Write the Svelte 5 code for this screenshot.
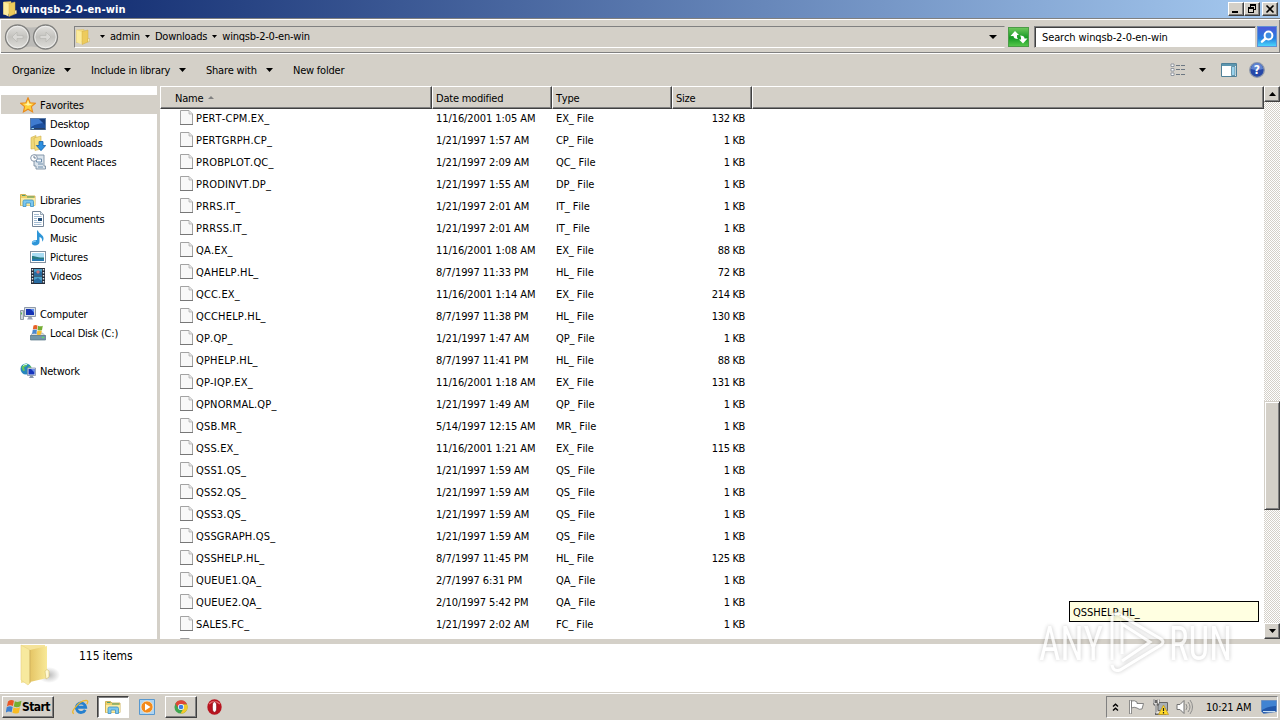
<script lang="ts">
	type FileRow = { name: string; modified: string; size: string };
	type Place = { label: string; icon: string; root?: boolean; active?: boolean };

	const files: FileRow[] = [
		{ name: 'PERT-CPM.EX_', modified: '11/16/2001 1:05 AM', size: '132 KB' },
		{ name: 'PERTGRPH.CP_', modified: '1/21/1997 1:57 AM', size: '1 KB' },
		{ name: 'PROBPLOT.QC_', modified: '1/21/1997 2:09 AM', size: '1 KB' },
		{ name: 'PRODINVT.DP_', modified: '1/21/1997 1:55 AM', size: '1 KB' },
		{ name: 'PRRS.IT_', modified: '1/21/1997 2:01 AM', size: '1 KB' },
		{ name: 'PRRSS.IT_', modified: '1/21/1997 2:01 AM', size: '1 KB' },
		{ name: 'QA.EX_', modified: '11/16/2001 1:08 AM', size: '88 KB' },
		{ name: 'QAHELP.HL_', modified: '8/7/1997 11:33 PM', size: '72 KB' },
		{ name: 'QCC.EX_', modified: '11/16/2001 1:14 AM', size: '214 KB' },
		{ name: 'QCCHELP.HL_', modified: '8/7/1997 11:38 PM', size: '130 KB' },
		{ name: 'QP.QP_', modified: '1/21/1997 1:47 AM', size: '1 KB' },
		{ name: 'QPHELP.HL_', modified: '8/7/1997 11:41 PM', size: '88 KB' },
		{ name: 'QP-IQP.EX_', modified: '11/16/2001 1:18 AM', size: '131 KB' },
		{ name: 'QPNORMAL.QP_', modified: '1/21/1997 1:49 AM', size: '1 KB' },
		{ name: 'QSB.MR_', modified: '5/14/1997 12:15 AM', size: '1 KB' },
		{ name: 'QSS.EX_', modified: '11/16/2001 1:21 AM', size: '115 KB' },
		{ name: 'QSS1.QS_', modified: '1/21/1997 1:59 AM', size: '1 KB' },
		{ name: 'QSS2.QS_', modified: '1/21/1997 1:59 AM', size: '1 KB' },
		{ name: 'QSS3.QS_', modified: '1/21/1997 1:59 AM', size: '1 KB' },
		{ name: 'QSSGRAPH.QS_', modified: '1/21/1997 1:59 AM', size: '1 KB' },
		{ name: 'QSSHELP.HL_', modified: '8/7/1997 11:45 PM', size: '125 KB' },
		{ name: 'QUEUE1.QA_', modified: '2/7/1997 6:31 PM', size: '1 KB' },
		{ name: 'QUEUE2.QA_', modified: '2/10/1997 5:42 PM', size: '1 KB' },
		{ name: 'SALES.FC_', modified: '1/21/1997 2:02 AM', size: '1 KB' },
	];

	const groups: Place[][] = [
		[
			{ label: 'Favorites', icon: 'star', root: true, active: true },
			{ label: 'Desktop', icon: 'desktop' },
			{ label: 'Downloads', icon: 'downloads' },
			{ label: 'Recent Places', icon: 'recent' },
		],
		[
			{ label: 'Libraries', icon: 'libraries', root: true },
			{ label: 'Documents', icon: 'document' },
			{ label: 'Music', icon: 'music' },
			{ label: 'Pictures', icon: 'pictures' },
			{ label: 'Videos', icon: 'videos' },
		],
		[
			{ label: 'Computer', icon: 'computer', root: true },
			{ label: 'Local Disk (C:)', icon: 'disk' },
		],
		[{ label: 'Network', icon: 'network', root: true }],
	];

	const path = ['admin', 'Downloads', 'winqsb-2-0-en-win'];

	const fileType = (name: string) => `${name.split('.').pop()} File`;
</script>

{#snippet caret()}
	<svg class="caret" width="7" height="4" viewBox="0 0 7 4"><path d="M0 0h7L3.5 4z" /></svg>
{/snippet}

{#snippet page()}
	<svg width="13" height="15" viewBox="0 0 13 15">
		<path d="M.5.5h8.500l3.500 3.500v10.500H.5z" fill="#f8f8f8" stroke="#a3a3a3" />
		<path d="M9 .5v3.500h3.500" fill="#e4e4e4" stroke="#aaa" stroke-width=".7" />
		<path d="M0 14.500h13" stroke="#777" />
	</svg>
{/snippet}

{#snippet icon(name: string)}
	<svg class="icon" width="16" height="16" viewBox="0 0 16 16">
		{#if name === 'folder'}
			<path d="M1.500 1 9 .5v12l-7.500 1z" fill="#f5dc7c" stroke="#dcbd5c" stroke-width=".5" />
			<path d="M7 2.500 13 1v12l-6 2.500z" fill="#edcb5c" stroke="#d0ad47" stroke-width=".5" />
			<path d="m1.500 1 5 2v12.500L1.500 13z" fill="#fbeb9c" />
			<path d="M13 9.500h1.500v3L13 13z" fill="#fff8cf" stroke="#c5a23e" stroke-width=".4" />
		{:else if name === 'star'}
			<path
				d="M8 .8 10.100 5.700l5.300.5-4 3.500 1.200 5.200L8 12.200l-4.600 2.700 1.200-5.200-4-3.500 5.300-.5z"
				fill="#ffd23c"
				stroke="#e88a1c"
				stroke-width="1.100"
			/>
			<path d="M8 3.200 9.200 6.800l3 .4-4.200 1.600-3.800-1.700 2.700-.3z" fill="#fff4a8" />
		{:else if name === 'desktop'}
			<rect x=".5" y="2.500" width="15" height="11" fill="#1c4f9e" stroke="#5c7da8" />
			<path d="M1 3h14v4c-5 0-9 1-14 4z" fill="#3f7bd0" />
			<path d="M9 3h6v6z" fill="#163d7d" />
			<path d="M1 12h14v1.500H1z" fill="#274166" />
			<path d="M1.500 12h2.500v1H1.500z" fill="#8fd0f5" />
		{:else if name === 'downloads'}
			<path d="M1 2.500 6 .5v13l-5 .5z" fill="#f0d878" stroke="#cfae4c" stroke-width=".6" />
			<path d="M4 3 11 1v13l-6 1.500z" fill="#f7df80" stroke="#cfae4c" stroke-width=".6" />
			<path d="M9 6.500h4v4h2.700L11 15.700 6.300 10.500H9z" fill="#2d8fe0" stroke="#1560a8" stroke-width=".8" />
		{:else if name === 'recent'}
			<path d="M4 1h10v11h1.500v3H6v-3H4z" fill="#dbe4ec" stroke="#7b8fa3" stroke-width=".9" />
			<path d="M6.500 5h5v3h-5zM8 10h5M8 13h5" fill="#f7fbff" stroke="#6f8fae" />
			<circle cx="4" cy="4" r="3.300" fill="#fff" stroke="#8797aa" />
			<path d="M4 2v2h2" fill="none" stroke="#48617b" stroke-width=".8" />
		{:else if name === 'libraries'}
			<path d="M.5 13.500v-11h5l1.500 1.500h8v9.500z" fill="#eed069" stroke="#c7a53f" stroke-width=".8" />
			<path d="M2 3.500h3.500M7 5h7" stroke="#4f9f72" />
			<path d="M1 6h14v7.500H1z" fill="#fbeba2" />
			<path
				d="M3 14.500V9.500q0-1.500 1.500-1.500h7.500q1.500 0 1.500 1.500v5h-3v-3.500H6v3.500z"
				fill="#7cc7ee"
				stroke="#3b90c4"
				stroke-width=".8"
			/>
		{:else if name === 'document'}
			<path d="M2.500.5h8l3 3v12h-11z" fill="#fff" stroke="#738497" />
			<path d="M10.500.5v3h3" fill="#dce7f0" stroke="#738497" stroke-width=".7" />
			<path d="M4 3.500h5M4 5.500h7.500M4 7.500h3M4 9.500h3M4 11.500h7.500M4 13.500h7.500" stroke="#8ba9c6" stroke-width=".8" />
			<path d="M8 7h4v3H8z" fill="#234e79" />
		{:else if name === 'music'}
			<path
				d="M8 .5c.5 3 5 4 5.500 7.500.2 1.500-.5 3-1.300 3.800.3-3.300-1.200-4.300-2.700-4.800V12c0 2.300-2 3.500-4.500 3.500-2 0-3.200-1-3.200-2.500 0-1.900 2.500-3.300 5.200-2.900V.5z"
				fill="#2e96d8"
			/>
			<path d="M2.800 12.600c.4-1.200 2-1.700 3.200-1.500" stroke="#a2ddff" fill="none" />
		{:else if name === 'pictures'}
			<rect x=".5" y="2.500" width="15" height="11" fill="#fff" stroke="#8391a0" />
			<path d="M2 4h12v8H2z" fill="#a9dcf3" />
			<path d="M2 7c4 0 5 2 12 1.500V12H2z" fill="#277c83" />
			<path d="M2 10h12v2H2z" fill="#2678b0" />
		{:else if name === 'videos'}
			<path d="M1 0h14v16H1z" fill="#252d3a" />
			<path d="M4 1h8v6.500H4zM4 8.500h8V15H4z" fill="#4c9fc8" />
			<path d="M4 4c3 0 4-2 8 0v3.500H4zM4 12l4-2 4 3v2H4z" fill="#286ba1" />
			<path d="m8 2 2 2-2 2-2-2z" fill="#c9747b" />
			<path d="M2.500 1v14M13.500 1v14" stroke="#e5eaee" stroke-width="1.400" stroke-dasharray="1.500 1.500" />
		{:else if name === 'computer'}
			<path d="M.5 4.500h3v9h-3z" fill="#ced6da" stroke="#7a8790" stroke-width=".8" />
			<path d="M1.500 6.500v2" stroke="#55bb51" />
			<path d="M4.500 1.500h11v9h-11z" fill="#d9e0e6" stroke="#8e99a9" />
			<path d="M6 3h8v6H6z" fill="#1532b4" />
			<path d="M10 3h4v4c-1-2-2-3-4-4z" fill="#5c8bee" />
			<path d="M8.500 11h3l1.500 2.500H7z" fill="#98a1b5" />
		{:else if name === 'disk'}
			<path d="M2.500 8h10l3 3H.5z" fill="#d8dce0" stroke="#8b969f" stroke-width=".6" />
			<path d="M.5 10.500h15v4.500H.5z" fill="#7296a8" stroke="#547384" stroke-width=".7" />
			<path d="M12 12.500h2" stroke="#56e65a" stroke-width="1.200" />
			<path d="M3.500.6q2-1 4 0L7 4.500q-2-1-4.200 0z" fill="#e86127" />
			<path d="M8 .8q2 1 4.800 0L12 5q-2 1-4.500 0z" fill="#75ad33" />
			<path d="M2.700 5q2-1 4.200 0l-.6 4q-2-1-4.200 0z" fill="#4988cf" />
			<path d="M7.400 5.500q2 1 4.500 0L11 9.400q-2 1-4.200 0z" fill="#f6bd2f" />
		{:else if name === 'network'}
			<circle cx="6" cy="6" r="5.500" fill="#2786bd" />
			<path d="M1.500 4Q4 0 8 1L6.500 3 4 4.500l1 3L3 8zM8 4l3-1 .5 3-2 2z" fill="#67c65c" />
			<path d="M3 2.500Q5 1 7 1.500" stroke="#c9f4f5" fill="none" />
			<path d="M7.500 5h8v7.500h-8z" fill="#dfe7f3" stroke="#8190aa" stroke-width=".8" />
			<path d="M8.500 6h6v5.500h-6z" fill="#1735bd" />
			<path d="M11 6h3.500v3.500z" fill="#6a91e9" />
			<path d="M10.500 12.500h2l1.500 2.500h-5z" fill="#8794a9" />
		{/if}
	</svg>
{/snippet}

<div class="screen">
	<header class="title-bar">
		{@render icon('folder')}
		<h1>winqsb-2-0-en-win</h1>
		<div class="window-buttons">
			<button aria-label="Minimize">
				<svg width="12" height="10" viewBox="0 0 12 10"><path d="M2 7h6v2H2z" /></svg>
			</button>
			<button aria-label="Restore">
				<svg width="12" height="10" viewBox="0 0 12 10">
					<path d="M4 0h6v6H8V5h1V2H5v1H4zM2 3h6v6H2zm1 2v3h4V5z" fill-rule="evenodd" />
				</svg>
			</button>
			<button class="close" aria-label="Close">
				<svg width="12" height="10" viewBox="0 0 12 10">
					<path d="m2.500 1.500 7 7m0-7-7 7" stroke="#000" stroke-width="1.600" />
				</svg>
			</button>
		</div>
	</header>

	<nav class="address-row">
		<svg class="travel" width="56" height="28" viewBox="0 0 56 28">
			<defs>
				<linearGradient id="travel-fill" x2="0" y2="1">
					<stop offset="0" stop-color="#e4e3e0" />
					<stop offset=".5" stop-color="#c3c2be" />
					<stop offset="1" stop-color="#e0dfdb" />
				</linearGradient>
			</defs>
			<path d="M12 2q16 5 32 0v24q-16-5-32 0z" fill="#bcbbb8" />
			{#each [14.5, 42.5] as cx}
				<circle {cx} cy="14" r="12" fill="url(#travel-fill)" stroke="#81817f" stroke-width="1.300" />
				<circle {cx} cy="14" r="10.700" fill="none" stroke="#f4f4f2" stroke-width=".8" />
			{/each}
			<path
				d="m14 9-5 5 5 5v-3.500h6v-3h-6zM43 9l5 5-5 5v-3.500h-6v-3h6z"
				fill="#d9d8d5"
				stroke="#b8b7b3"
				stroke-width=".7"
			/>
		</svg>
		<div class="address">
			{@render icon('folder')}
			{#each path as part}
				<span class="crumb">{@render caret()}{part}</span>
			{/each}
			<span class="history">
				<svg width="8" height="4" viewBox="0 0 8 4"><path d="M0 0h8L4 4z" /></svg>
			</span>
		</div>
		<button class="refresh" aria-label="Refresh">
			<svg width="20" height="18" viewBox="0 0 20 18">
				<path
					d="M1.500 8 6 3l4 4H8v1.500Q8 10 9 11 4.500 11 4.500 8zM18.500 10.500 14 15.500l-4-4h2V10q0-1.500-1-2.500 4.500 0 4.500 3z"
					fill="#fff"
				/>
			</svg>
		</button>
		<div class="search">Search winqsb-2-0-en-win</div>
		<button class="search-button" aria-label="Search">
			<svg width="18" height="18" viewBox="0 0 18 18">
				<circle cx="10.500" cy="7.500" r="3.900" fill="#3e8de0" stroke="#fff" stroke-width="2" />
				<path d="m7.500 10.500-3.500 3.200" stroke="#fff" stroke-width="2.500" stroke-linecap="round" />
			</svg>
		</button>
	</nav>

	<div class="toolbar">
		<span class="command organize">Organize {@render caret()}</span>
		<span class="command include">Include in library {@render caret()}</span>
		<span class="command share">Share with {@render caret()}</span>
		<span class="command">New folder</span>
		<div class="views">
			<svg width="16" height="14" viewBox="0 0 16 14">
				<path d="M1 1h3v2.500H1zM1 5.500h3V8H1zM1 10h3v2.500H1z" fill="#fff" stroke="#7e8793" stroke-width=".8" />
				<path d="M6 2.500h4m1 0h4M6 6.500h4m1 0h4M6 11.500h4m1 0h4" stroke="#6c7782" />
			</svg>
			{@render caret()}
			<svg class="preview" width="16" height="14" viewBox="0 0 16 14">
				<path d="M.5.5h15v13H.5z" fill="#fff" stroke="#4e8098" />
				<path d="M1 1h14v2H1z" fill="#5c96af" />
				<path d="M10.500 3.500H14v9h-3.500z" fill="#9bd3ed" stroke="#4e8098" stroke-width=".8" />
			</svg>
			<svg width="16" height="16" viewBox="0 0 16 16">
				<circle cx="8" cy="8" r="7.300" fill="#2547a8" stroke="#8f99ab" stroke-width="1.300" />
				<path d="M2 7a6 6 0 0 1 12 0Q8 9 2 7z" fill="#5f83d0" />
				<text x="8" y="12.300" class="help" text-anchor="middle">?</text>
			</svg>
		</div>
	</div>

	<main>
		<aside>
			{#each groups as group}
				<ul>
					{#each group as place}
						<li class:root={place.root} class:active={place.active}>
							{@render icon(place.icon)}
							<span>{place.label}</span>
						</li>
					{/each}
				</ul>
			{/each}
		</aside>

		<section class="files">
			<div class="columns heading">
				<div>
					Name <svg class="sort" width="6" height="3" viewBox="0 0 6 3"><path d="M0 3h6L3 0z" /></svg>
				</div>
				<div>Date modified</div>
				<div>Type</div>
				<div>Size</div>
				<div></div>
			</div>
			<div class="list">
				{#each files as { name, modified, size } (name)}
					<div class="columns row">
						<div class="name">{@render page()}<span>{name}</span></div>
						<div>{modified}</div>
						<div>{fileType(name)}</div>
						<div class="size">{size}</div>
					</div>
				{/each}
				<div class="columns row"><div class="name">{@render page()}</div></div>
			</div>
		</section>

		<div class="scrollbar">
			<button aria-label="Scroll up">
				<svg width="7" height="4" viewBox="0 0 7 4"><path d="M0 4h7L3.500 0z" /></svg>
			</button>
			<div class="thumb"></div>
			<button aria-label="Scroll down">{@render caret()}</button>
		</div>
	</main>

	<footer class="details">
		<svg width="42" height="46" viewBox="0 0 42 46">
			<defs>
				<linearGradient id="folder-front">
					<stop offset="0" stop-color="#e5c565" />
					<stop offset="1" stop-color="#f8e998" />
				</linearGradient>
				<radialGradient id="folder-shadow">
					<stop offset="0" stop-color="#777" stop-opacity=".5" />
					<stop offset="1" stop-color="#777" stop-opacity="0" />
				</radialGradient>
			</defs>
			<ellipse cx="30" cy="31" rx="11" ry="8" fill="url(#folder-shadow)" />
			<path d="M2 1h24v30L12 37 2 39z" fill="#f5e39a" />
			<path d="M11 6 28 2v32l-17 4z" fill="url(#folder-front)" />
			<path d="M2 1 11 6v33l-2 2-7-5z" fill="#f7e99e" stroke="#e7d282" stroke-width=".6" />
			<path d="M11 6v33" stroke="#c4a34d" stroke-width=".7" />
			<path d="M26 27q2-3 4 0v6l-3 2z" fill="#fff9d6" stroke="#d4bd6c" stroke-width=".6" />
		</svg>
		<span>115 items</span>
	</footer>

	<div class="taskbar">
		<button class="start">
			<svg width="16" height="16" viewBox="0 0 16 16">
				<path d="M2 2.500Q5 .1 8 1.800L6.900 7Q3.900 5.500.9 7.500z" fill="#e95624" />
				<path d="M8.800 2.300q3 1.500 6.700-.5l-1.200 5.500q-3.300 1.700-6.500.2z" fill="#74ae31" />
				<path d="M.7 8.300q3-1.800 6-.4l-1.100 5.300q-3-1.500-5.800.3z" fill="#3e80d0" />
				<path d="M7.500 8.500q3 1.500 6.500-.2l-1.200 5.400q-3.200 1.700-6.400.1z" fill="#f8bb22" />
			</svg>
			<b>Start</b>
		</button>
		<svg class="ie" width="17" height="16" viewBox="0 0 18 16">
			<path d="M14 11A5 5 0 1 1 14.500 8.300H5.500" fill="none" stroke="#2580cf" stroke-width="3" />
			<path d="M2 15q-3-1 1-6Q9 1 15 1q3 .3.7 4" fill="none" stroke="#edb72c" stroke-width="1.300" />
		</svg>
		<div class="task pressed">{@render icon('libraries')}</div>
		<svg class="player" width="16" height="16" viewBox="0 0 16 16">
			<path d="M.5.5h15v15H.5z" fill="#aed4f1" stroke="#5898cf" />
			<circle cx="8" cy="8" r="6" fill="#f38a1b" stroke="#fff0d5" stroke-width=".7" />
			<path d="m6 4.500 5.500 3.500L6 11.500z" fill="#fff" />
		</svg>
		<div class="task">
			<svg width="14" height="14" viewBox="0 0 16 16">
				<circle cx="8" cy="8" r="7.500" fill="#3fa650" />
				<path d="M1.500 4.200A7.500 7.500 0 0 1 15 5H8L5 9z" fill="#df4638" />
				<path d="M15 5a7.500 7.500 0 0 1-7.500 10.500L11 9.500 8 5z" fill="#f5c929" />
				<circle cx="8" cy="8" r="3.500" fill="#fff" />
				<circle cx="8" cy="8" r="2.700" fill="#3e7de2" />
			</svg>
		</div>
		<svg class="opera" width="15" height="16" viewBox="0 0 15 16">
			<ellipse cx="7.500" cy="8" rx="7.200" ry="7.800" fill="#b8141f" />
			<path d="M2 5Q7 0 13 5" stroke="#e5696c" stroke-width="1.500" fill="none" />
			<ellipse cx="7.500" cy="8" rx="2.200" ry="5.300" fill="#fff" stroke="#850d16" stroke-width=".7" />
		</svg>
		<div class="tray">
			<svg class="expand" width="7" height="9" viewBox="0 0 7 9">
				<path d="m1 3.500 2.500-2.300L6 3.500m-5 4 2.500-2.300L6 7.500" fill="none" stroke="#000" stroke-width="1.400" />
			</svg>
			<svg width="17" height="16" viewBox="0 0 17 16">
				<path d="M2.500 1v14" stroke="#777" stroke-width="2.500" />
				<path d="M2.500 1.500v13" stroke="#fff" />
				<path
					d="M3.500 2q3-1 5.500 1v1.500h6.500L14 10q-3 1-5-1-3-1.500-5.500 0z"
					fill="#fff"
					stroke="#777"
					stroke-width=".9"
				/>
			</svg>
			<svg class="net" width="17" height="16" viewBox="0 0 17 16">
				<path d="M6 3.500h9.500v8H6z" fill="#a9b0b5" stroke="#666" />
				<path d="M2 .5V4q0 2 2 2v9h10M4 1v3M6.500.5v4Q6.500 6 4 6" fill="none" stroke="#666" stroke-width="2" />
				<path d="M2 .5V4q0 1 2 1v9h8M6.500.5v4" fill="none" stroke="#fff" stroke-width=".9" />
				<path d="m11.500 6 5 9.500h-10z" fill="#ffda27" stroke="#bc921b" stroke-width=".7" />
				<path d="M11.500 9v3m0 1v1.500" stroke="#222" stroke-width="1.200" />
			</svg>
			<svg class="sound" width="17" height="16" viewBox="0 0 17 16">
				<path d="M1 5.500h3L8 1.500v13l-4-4H1z" fill="#fff" stroke="#737373" />
				<path d="M10 5q2 3 0 6m2-8q4 5 0 10m2-12q5 7 0 14" fill="none" stroke="#858585" stroke-width=".9" />
			</svg>
			<time>10:21 AM</time>
			<svg class="show" width="16" height="14" viewBox="0 0 16 14">
				<path d="M.5.5h15v11l-13 2-2-2z" fill="#2257aa" stroke="#6d90c0" />
				<path d="M1 1h14v5q-7 0-14 4z" fill="#4183d2" />
				<path d="M2 11.500h12" stroke="#c7e0f4" />
			</svg>
		</div>
	</div>

	<div class="tooltip">QSSHELP.HL_</div>
	<svg class="watermark" width="210" height="66" viewBox="0 0 210 66">
		<text x="4" y="50" textLength="64" lengthAdjust="spacingAndGlyphs">ANY</text>
		<text x="134" y="50" textLength="63" lengthAdjust="spacingAndGlyphs">RUN</text>
		<path d="M77 6v44M87 44V14l28 18-28 19M77 6q3-5 10 0l39 23q4 3 0 6L85 60q-7 2-8-5" />
	</svg>
</div>

<style>
	:global(body) {
		overflow: hidden;
	}

	.screen {
		position: relative;
		display: flex;
		flex-direction: column;
		width: 1280px;
		height: 720px;
		overflow: hidden;
		background: #d4d0c8;
		color: #000;
		font-family: 'DejaVu Sans Condensed', 'DejaVu Sans', sans-serif;
		font-size: 11px;
		font-stretch: condensed;
		font-kerning: none;
		letter-spacing: -0.22px;
		line-height: 14px;
		white-space: nowrap;
	}

	svg {
		display: block;
		flex: none;
	}

	button {
		display: flex;
		align-items: center;
		justify-content: center;
		box-sizing: border-box;
		padding: 0;
		background: #d4d0c8;
		border: 1px solid;
		border-color: #fff #404040 #404040 #fff;
		box-shadow: inset -1px -1px #808080;
		color: inherit;
		font: inherit;
		letter-spacing: inherit;
	}

	ul {
		margin: 0;
		padding: 0;
		list-style: none;
	}

	.title-bar {
		display: flex;
		align-items: center;
		height: 18px;
		padding: 0 2px;
		background: linear-gradient(90deg, #0a246a, #a6caf0);
		color: #fff;
	}

	h1 {
		margin: 0 0 0 2px;
		padding-top: 1px;
		font-size: 11px;
		font-weight: bold;
		letter-spacing: 0.15px;
	}

	.window-buttons {
		display: flex;
		margin-left: auto;
	}

	.window-buttons button {
		width: 16px;
		height: 14px;
	}

	.window-buttons .close {
		margin-left: 2px;
	}

	.address-row {
		display: flex;
		align-items: center;
		box-sizing: border-box;
		height: 36px;
		padding: 1px 1px 0 3px;
		border-top: 1px solid #808080;
		border-bottom: 1px solid #fff;
		box-shadow:
			inset 1px 1px #fff,
			inset -1px -1px #808080;
	}

	.address {
		display: flex;
		align-items: center;
		box-sizing: border-box;
		width: 931px;
		height: 22px;
		margin-left: 15px;
		border: 1px solid;
		border-color: #808080 #d4d0c8 #fff #808080;
	}

	.crumb {
		display: flex;
		align-items: center;
	}

	.crumb .caret {
		width: 5px;
		height: 3px;
		margin: 0 5px 1px;
	}

	.crumb:nth-child(2) {
		margin-left: 4px;
	}

	.history {
		margin: 0 7px 0 auto;
	}

	.refresh {
		width: 21px;
		height: 20px;
		margin-left: 3px;
		background: linear-gradient(#6cc65b, #159923 55%, #53c749);
		border-color: #4b9b47;
		box-shadow: none;
	}

	.search {
		box-sizing: border-box;
		width: 222px;
		height: 22px;
		margin-left: 5px;
		padding: 4px 7px;
		background: #fff;
		border: 1px solid;
		border-color: #808080 #d4d0c8 #d4d0c8 #808080;
		box-shadow: inset 1px 1px #404040;
		letter-spacing: -0.12px;
	}

	.search-button {
		width: 20px;
		height: 21px;
		margin-left: 1px;
		background: linear-gradient(#4b59d9, #257fdf 60%, #4bd5fc);
		border-color: #6290d3;
		box-shadow: none;
	}

	.toolbar {
		display: flex;
		align-items: center;
		height: 31px;
		padding: 0 15px 0 12px;
	}

	.command {
		display: flex;
		align-items: center;
		justify-content: space-between;
		margin-right: 20px;
		padding-top: 2px;
	}

	.command .caret {
		margin-bottom: 2px;
	}

	.organize {
		width: 59px;
	}

	.include {
		width: 95px;
	}

	.share {
		width: 67px;
	}

	.views {
		display: flex;
		align-items: center;
		margin-left: auto;
	}

	.views .caret {
		margin: 0 15px 0 13px;
	}

	.preview {
		margin-right: 12px;
	}

	.help {
		fill: #fff;
		font-size: 12px;
		font-weight: bold;
		letter-spacing: 0;
	}

	main {
		display: flex;
		box-sizing: border-box;
		height: 554px;
		padding-top: 1px;
	}

	aside {
		box-sizing: border-box;
		width: 157px;
		padding: 9px 0 0 1px;
		background: #fff;
	}

	aside ul {
		margin-bottom: 19px;
	}

	li {
		display: flex;
		align-items: center;
		height: 19px;
		padding-left: 29px;
	}

	li span {
		margin-left: 4px;
		padding-top: 2px;
	}

	.root {
		padding-left: 19px;
	}

	.active {
		background: #d4d0c8;
	}

	.files {
		display: flex;
		flex-direction: column;
		width: 1104px;
		margin-left: 3px;
		background: #fff;
	}

	.columns {
		display: grid;
		grid-template-columns: 272px 120px 120px 80px 1fr;
	}

	.heading {
		flex: none;
		height: 23px;
		background: #d4d0c8;
	}

	.heading div {
		display: flex;
		align-items: center;
		box-sizing: border-box;
		padding: 2px 0 0 3px;
		border: 1px solid;
		border-color: #fff #404040 #404040 #fff;
		box-shadow: inset -1px -1px #808080;
	}

	.heading div:first-child {
		padding-left: 14px;
	}

	.sort {
		margin: -3px 0 0 5px;
		fill: #808080;
	}

	.list {
		flex: 1;
		overflow: hidden;
	}

	.row {
		align-items: center;
		height: 22px;
		letter-spacing: -0.08px;
	}

	.row:first-child {
		margin-top: -2px;
	}

	.row div {
		padding: 2px 0 0 4px;
	}

	.row .name {
		display: flex;
		align-items: center;
		padding: 0 0 0 20px;
		letter-spacing: 0.17px;
	}

	.row .name svg {
		margin-bottom: 1px;
	}

	.row .name span {
		margin-left: 3px;
		padding-top: 2px;
	}

	.row .size {
		padding: 2px 7px 0 0;
		letter-spacing: -0.35px;
		text-align: right;
	}

	.scrollbar {
		display: flex;
		flex-direction: column;
		width: 16px;
		background: repeating-conic-gradient(#fff 0 25%, #d4d0c8 0 50%) 0 0 / 2px 2px;
	}

	.scrollbar button {
		height: 16px;
	}

	.thumb {
		box-sizing: border-box;
		height: 109px;
		margin: 299px 0 auto;
		background: #d4d0c8;
		border: 1px solid;
		border-color: #d4d0c8 #404040 #404040 #d4d0c8;
		box-shadow:
			inset 1px 1px #fff,
			inset -1px -1px #808080;
	}

	.details {
		display: flex;
		box-sizing: border-box;
		height: 54px;
		padding: 0 0 0 19px;
		background: #fff;
		border-top: 5px solid #d4d0c8;
		border-bottom: 1px solid #d4d0c8;
	}

	.details span {
		margin: 5px 0 0 18px;
		font-size: 12px;
		letter-spacing: -0.05px;
	}

	.taskbar {
		display: flex;
		align-items: center;
		box-sizing: border-box;
		height: 27px;
		padding: 0 2px;
		border-top: 1px solid #fff;
	}

	.start {
		width: 52px;
		height: 22px;
	}

	.start b {
		font-size: 12px;
		letter-spacing: -0.55px;
	}

	.ie {
		margin-left: 18px;
	}

	.task {
		display: flex;
		align-items: center;
		justify-content: center;
		box-sizing: border-box;
		width: 32px;
		height: 22px;
		border: 1px solid;
		border-color: #fff #404040 #404040 #fff;
		box-shadow: inset -1px -1px #808080;
	}

	.pressed {
		margin: 0 10px 0 8px;
		background: #fff;
		border-color: #404040 #fff #fff #404040;
		box-shadow: inset 1px 1px #808080;
	}

	.player {
		margin-right: 10px;
	}

	.opera {
		margin-left: 10px;
	}

	.tray {
		display: flex;
		align-items: center;
		box-sizing: border-box;
		width: 172px;
		height: 22px;
		margin-left: auto;
		padding-left: 5px;
		border: 1px solid;
		border-color: #808080 #fff #fff #808080;
	}

	.expand {
		margin-right: 9px;
	}

	.net {
		margin: 0 7px;
	}

	.tray time {
		margin-left: 13px;
		padding-top: 1px;
	}

	.show {
		margin: 0 0 0 auto;
	}

	/* floats above the list, near the pointer */
	.tooltip {
		position: absolute;
		left: 1069px;
		top: 601px;
		box-sizing: border-box;
		width: 190px;
		height: 21px;
		padding: 4px 3px 2px;
		background: #ffffe1;
		border: 1px solid #000;
		letter-spacing: 0;
	}

	.watermark {
		position: absolute;
		left: 1035px;
		top: 610px;
		filter: drop-shadow(0 0 2px rgb(0 0 0 / 30%));
		opacity: 0.75;
	}

	.watermark text {
		fill: #fff;
		font-family: Roboto, sans-serif;
		font-size: 49px;
		letter-spacing: 0;
	}

	.watermark path {
		fill: none;
		stroke: #fff;
		stroke-width: 3;
	}
</style>
